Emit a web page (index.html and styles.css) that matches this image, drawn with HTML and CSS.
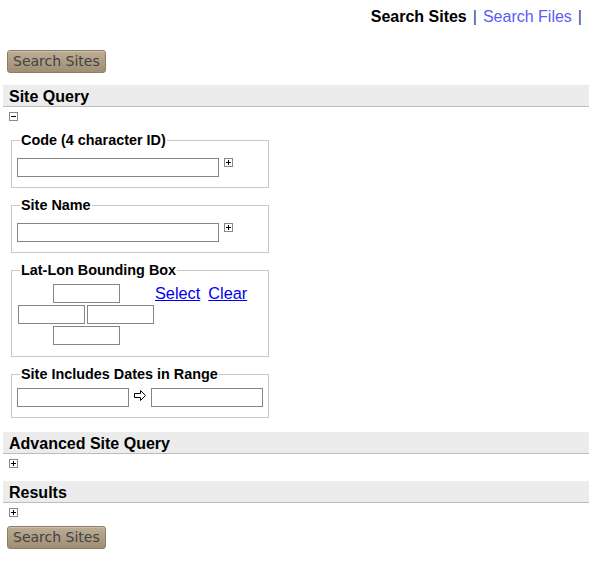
FILE: index.html
```html
<!DOCTYPE html>
<html>
<head>
<meta charset="utf-8">
<link rel="stylesheet" href="styles.css">
</head>
<body>
<div class="topnav">
  <span class="nav-current">Search Sites</span><span class="nav-sep">|</span><a class="nav-link" href="#">Search Files</a><span class="nav-sep">|</span>
</div>

<div class="btn-row"><button class="search-btn">Search Sites</button></div>

<div class="section section-first">
  <div class="section-head">Site Query</div>
  <svg class="toggle" width="9" height="9" viewBox="0 0 9 9"><rect x="0.5" y="0.5" width="8" height="8" fill="#fff" stroke="#888"/><line x1="2" y1="4.5" x2="7" y2="4.5" stroke="#000"/></svg>

  <fieldset class="fs fs-text">
    <legend>Code (4 character ID)</legend>
    <div class="input-row">
      <input class="txt txt-wide" type="text">
      <svg class="add" width="9" height="9" viewBox="0 0 9 9"><rect x="0.5" y="0.5" width="8" height="8" fill="#fff" stroke="#888"/><line x1="2" y1="4.5" x2="7" y2="4.5" stroke="#000"/><line x1="4.5" y1="2" x2="4.5" y2="7" stroke="#000"/></svg>
    </div>
  </fieldset>

  <fieldset class="fs fs-text">
    <legend>Site Name</legend>
    <div class="input-row">
      <input class="txt txt-wide" type="text">
      <svg class="add" width="9" height="9" viewBox="0 0 9 9"><rect x="0.5" y="0.5" width="8" height="8" fill="#fff" stroke="#888"/><line x1="2" y1="4.5" x2="7" y2="4.5" stroke="#000"/><line x1="4.5" y1="2" x2="4.5" y2="7" stroke="#000"/></svg>
    </div>
  </fieldset>

  <fieldset class="fs fs-box fs-bbox">
    <legend>Lat-Lon Bounding Box</legend>
    <div class="bbox-row">
      <div class="bbox">
        <div class="bbox-line"><input class="txt txt-small" type="text"></div>
        <div class="bbox-line"><input class="txt txt-small" type="text"><input class="txt txt-small" type="text"></div>
        <div class="bbox-line"><input class="txt txt-small" type="text"></div>
      </div>
      <div class="bbox-links"><a href="#">Select</a><a href="#">Clear</a></div>
    </div>
  </fieldset>

  <fieldset class="fs fs-box">
    <legend>Site Includes Dates in Range</legend>
    <div class="date-row">
      <input class="txt txt-date" type="text">
      <svg class="arrow" width="13" height="12" viewBox="0 0 13 12"><polygon points="0.5,3.5 6.5,3.5 6.5,0.5 11.5,5.5 6.5,10.5 6.5,7.5 0.5,7.5" fill="#fff" stroke="#000"/></svg>
      <input class="txt txt-date" type="text">
    </div>
  </fieldset>
</div>

<div class="section section-adv">
  <div class="section-head">Advanced Site Query</div>
  <svg class="toggle" width="9" height="9" viewBox="0 0 9 9"><rect x="0.5" y="0.5" width="8" height="8" fill="#fff" stroke="#888"/><line x1="2" y1="4.5" x2="7" y2="4.5" stroke="#000"/><line x1="4.5" y1="2" x2="4.5" y2="7" stroke="#000"/></svg>
</div>

<div class="section section-res">
  <div class="section-head">Results</div>
  <svg class="toggle" width="9" height="9" viewBox="0 0 9 9"><rect x="0.5" y="0.5" width="8" height="8" fill="#fff" stroke="#888"/><line x1="2" y1="4.5" x2="7" y2="4.5" stroke="#000"/><line x1="4.5" y1="2" x2="4.5" y2="7" stroke="#000"/></svg>
</div>

<div class="btn-row btn-row-bottom"><button class="search-btn">Search Sites</button></div>
</body>
</html>
```
FILE: styles.css
```css
html, body {
  margin: 0;
  padding: 0;
  background: #fff;
}
body {
  font-family: "Liberation Sans", Arial, sans-serif;
  color: #000;
}
.topnav {
  margin: 8px 1px 0 0;
  text-align: right;
  font-size: 16px;
  line-height: 18px;
}
.nav-current {
  font-weight: bold;
  color: #000;
}
.nav-sep {
  color: #1a428f;
  padding: 0 6px;
}
.nav-link {
  color: #5b5bf7;
  text-decoration: none;
}
.btn-row {
  margin-top: 24px;
  padding-left: 7px;
}
.btn-row-bottom {
  margin-top: 9px;
}
.search-btn {
  display: block;
  box-sizing: border-box;
  height: 23px;
  margin: 0;
  padding: 0 5px;
  font-family: "DejaVu Sans", Verdana, sans-serif;
  font-size: 14px;
  line-height: 21px;
  color: #424242;
  background: linear-gradient(#bcad95, #a08e74);
  border: 1px solid #8e7d64;
  border-radius: 3px;
  box-shadow: inset 0 1px 0 rgba(255,255,255,0.25);
}
.section-first {
  margin-top: 12px;
}
.section-adv {
  margin-top: 14px;
}
.section-res {
  margin-top: 13px;
}
.section-head {
  margin-left: 3px;
  box-sizing: border-box;
  height: 22px;
  padding: 2px 6px 0;
  font-size: 16px;
  line-height: 19px;
  font-weight: bold;
  background: #ececec;
  border-bottom: 1px solid #bdbdbd;
}
.toggle {
  display: block;
  margin: 5px 0 0 9px;
}
.fs {
  box-sizing: border-box;
  width: 258px;
  margin: 11px 0 0 11px;
  border: 1px solid #c8c8c8;
  padding: 10px 5px 10px;
  min-width: 0;
}
.fs + .fs {
  margin-top: 9px;
}
.fs-box {
  padding-top: 6px;
}
.fs-bbox {
  padding-bottom: 11px;
}
.fs legend {
  margin-left: 3px;
  padding: 0 1px;
  font-size: 14.4px;
  line-height: 16px;
  font-weight: bold;
}
.input-row {
  display: flex;
  align-items: flex-start;
  gap: 5px;
}
.txt {
  box-sizing: border-box;
  height: 19px;
  margin: 0;
  padding: 1px 2px;
  border: 1px solid #858585;
  background: #fff;
  font-family: "Liberation Sans", Arial, sans-serif;
  font-size: 13px;
  border-radius: 0;
  outline: none;
}
.txt-wide {
  width: 202px;
}
.txt-small {
  width: 67px;
}
.txt-date {
  width: 112px;
}
.add {
  display: block;
  flex: none;
}
.bbox-row {
  display: flex;
  align-items: flex-start;
  padding-left: 1px;
}
.bbox {
  display: flex;
  flex-direction: column;
  align-items: center;
  gap: 2px;
  width: 136px;
}
.bbox-line {
  display: flex;
  gap: 2px;
}
.bbox-links {
  display: flex;
  gap: 8px;
  margin-left: 1px;
  font-size: 16.3px;
  line-height: 18px;
}
.bbox-links a {
  color: #0000ee;
  text-decoration: underline;
}
.date-row {
  display: flex;
  align-items: center;
}
.arrow {
  display: block;
  margin: -3px 4px 0 5px;
}
```
